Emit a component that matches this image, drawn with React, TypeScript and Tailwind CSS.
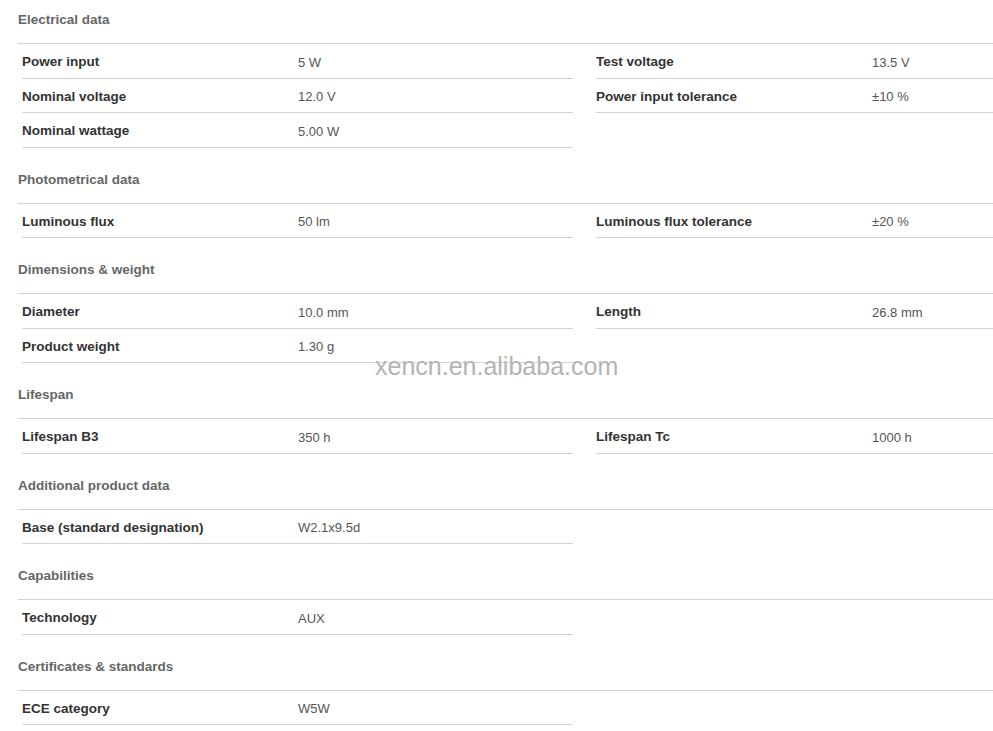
type Row = [string, string]

type Section = {
    title: string
    left: Row[]
    right: Row[]
}

const sections: Section[] = [
    {
        title: 'Electrical data',
        left: [
            ['Power input', '5 W'],
            ['Nominal voltage', '12.0 V'],
            ['Nominal wattage', '5.00 W'],
        ],
        right: [
            ['Test voltage', '13.5 V'],
            ['Power input tolerance', '±10 %'],
        ],
    },
    {
        title: 'Photometrical data',
        left: [['Luminous flux', '50 lm']],
        right: [['Luminous flux tolerance', '±20 %']],
    },
    {
        title: 'Dimensions & weight',
        left: [
            ['Diameter', '10.0 mm'],
            ['Product weight', '1.30 g'],
        ],
        right: [['Length', '26.8 mm']],
    },
    {
        title: 'Lifespan',
        left: [['Lifespan B3', '350 h']],
        right: [['Lifespan Tc', '1000 h']],
    },
    {
        title: 'Additional product data',
        left: [['Base (standard designation)', 'W2.1x9.5d']],
        right: [],
    },
    {
        title: 'Capabilities',
        left: [['Technology', 'AUX']],
        right: [],
    },
    {
        title: 'Certificates & standards',
        left: [['ECE category', 'W5W']],
        right: [],
    },
]

const DataRow = ({ row }: { row: Row }) => (
    <div className="flex h-[34.5px] items-center border-b border-[#d2d2d2] pt-[3px]">
        <span className="w-[276px] shrink-0 text-[13.5px] font-bold text-[#333]">
            {row[0]}
        </span>
        <span className="text-[13px] text-[#555]">{row[1]}</span>
    </div>
)

const App = () => {
    return (
        <div
            className="relative min-h-screen overflow-hidden bg-white pl-[18px]"
            style={{ fontFamily: '"Liberation Sans", Arial, sans-serif' }}
        >
            {sections.map((section, i) => (
                <div key={section.title} className={i === 0 ? '' : 'mt-[12px]'}>
                    <h3 className="pt-[12px] pb-[15px] text-[13.5px] leading-4 font-bold text-[#666]">
                        {section.title}
                    </h3>
                    <div className="grid grid-cols-[551px_1fr] gap-x-[23px] border-t border-[#d2d2d2] pl-[4px]">
                        <div className="flex flex-col">
                            {section.left.map((row) => (
                                <DataRow key={row[0]} row={row} />
                            ))}
                        </div>
                        <div className="flex flex-col">
                            {section.right.map((row) => (
                                <DataRow key={row[0]} row={row} />
                            ))}
                        </div>
                    </div>
                </div>
            ))}

            {/* watermark */}
            <div className="pointer-events-none absolute top-[350px] left-[375px] text-[25px] leading-8 text-[#b4b4b4]">
                xencn.en.alibaba.com
            </div>
        </div>
    )
}

export default App
